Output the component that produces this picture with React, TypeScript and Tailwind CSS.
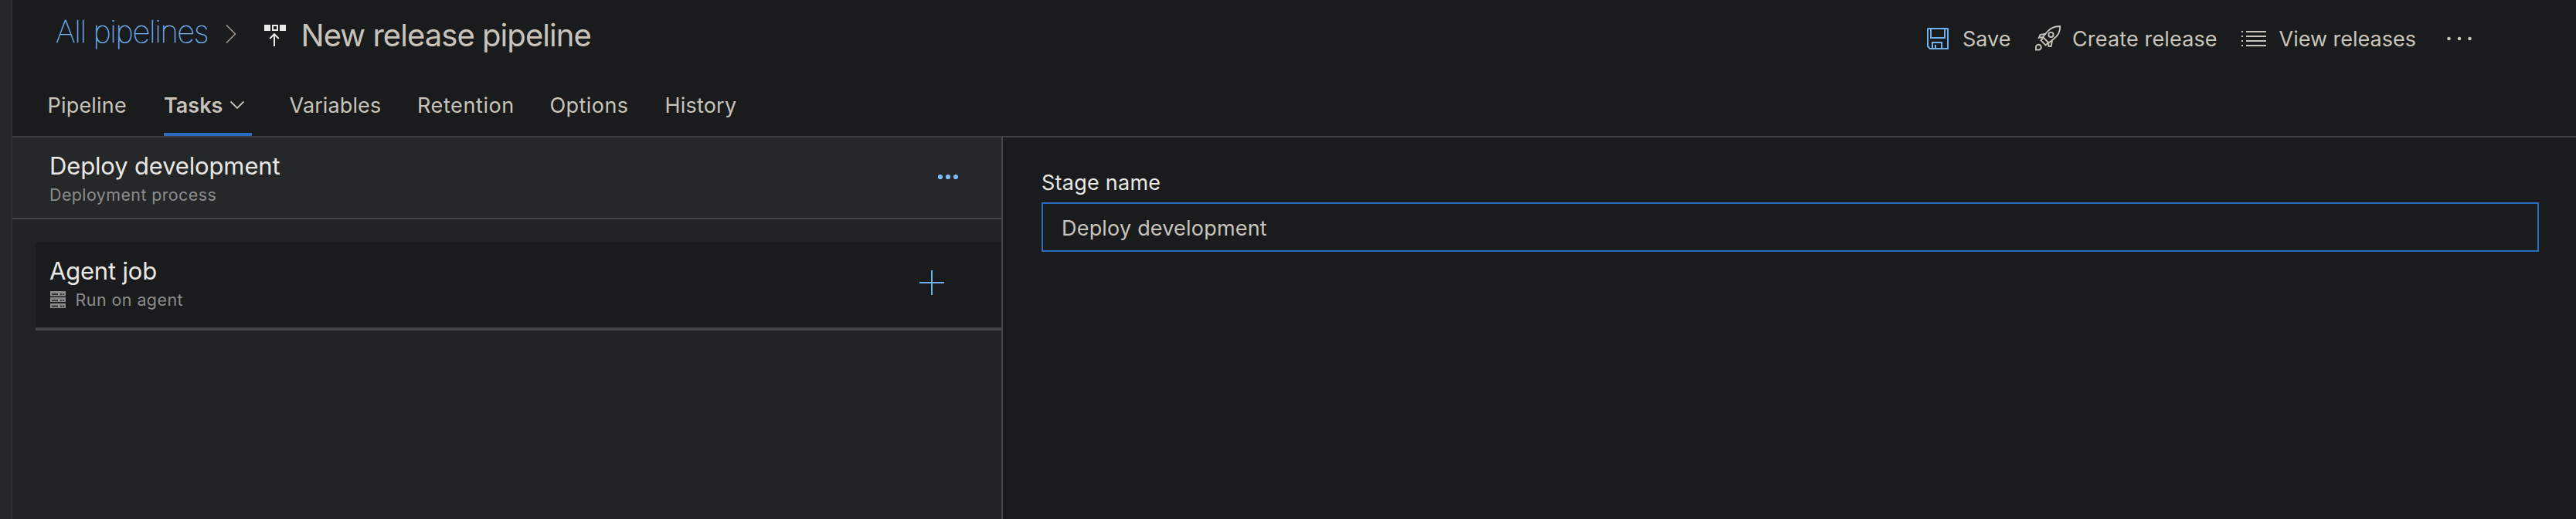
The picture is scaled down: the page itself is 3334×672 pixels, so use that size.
const tabs = [
  { label: "Variables", className: "w-[165.5px] tracking-[0.12px]" },
  { label: "Retention", className: "w-[171.5px] tracking-[0.6px]" },
  { label: "Options", className: "w-[149px] tracking-[0.43px]" },
  { label: "History", className: "w-[100px] tracking-[0.2px]" },
];

function BreadcrumbChevron() {
  return (
    <svg className="h-7 w-4" viewBox="0 0 16 28" fill="none" stroke="#a19a92" strokeWidth="1.6">
      <path d="M2 2.5 13.5 14 2 25.5" />
    </svg>
  );
}

function ReleaseIcon() {
  return (
    <svg className="h-7 w-7" viewBox="0 0 28 28" fill="none" stroke="#eae8e4" strokeWidth="2">
      <path d="M0 0h8v8H0zM20 0h8v8h-8z" fill="#eae8e4" stroke="none" />
      <path d="M11 1h6v6h-6z" />
      <path d="M13 28V12" />
      <path d="M7.2 18 13 12.2 18.8 18" />
    </svg>
  );
}

function SaveIcon() {
  return (
    <svg className="h-7 w-7" viewBox="0 0 28 28" fill="none" stroke="#6fb1f0" strokeWidth="2">
      <path d="M2 1h24.5l.5.5V27H4l-3-3V1.5z" />
      <path d="M5 1v12h18V1" />
      <path d="M7 27v-8h12v8" />
      <path d="M11 22v5" />
    </svg>
  );
}

function RocketIcon() {
  return (
    <svg className="h-[34px] w-[34px]" viewBox="0 0 34 34" fill="none" stroke="#c8c4bc" strokeWidth="1.9">
      <path d="M32.2 1C25 .8 19.5 3.5 15.2 8.5L10 15l7.5 7.5 7-5.4C29.5 13 32.5 8 32.2 1z" />
      <circle cx="20.5" cy="12" r="3.1" />
      <path d="M14 10.8 6.5 12 4.800 15.8 10 15.3" />
      <path d="M22 19.5 20.6 27H17.5l-.5-5" />
      <path d="M10 16.5 7.500 19.3l6 6.2 3.7-3.2" />
      <path d="M1 31.5V28a3.4 3.4 0 1 1 3.4 3.5z" />
    </svg>
  );
}

function ListIcon() {
  return (
    <svg className="h-5 w-8" viewBox="0 0 32 20" fill="#c8c4bc">
      <path d="M0 0h2v2H0zM6 0h26v2H6zM0 6h2v2H0zM6 6h26v2H6zM0 12h2v2H0zM6 12h26v2H6zM0 18h2v2H0zM6 18h26v2H6z" />
    </svg>
  );
}

function ServerIcon() {
  return (
    <svg className="h-[22px] w-5" viewBox="0 0 20 22">
      <path d="M0 0h20v6.500H0zM0 8h20v6H0zM0 15.800h20V22H0z" fill="#8b8b8b" />
      <path d="M2 3h8v2H2zM13 3h2v2h-2zM16 3h2v2h-2zM2 11h8v1.800H2zM13 11h2v1.800h-2zM16 11h2v1.800h-2zM2 18.500h8v2H2zM13 18.500h2v2h-2zM16 18.500h2v2h-2z" fill="#303133" />
    </svg>
  );
}

function Toolbar() {
  return (
    <div className="flex items-start text-[27px] leading-10">
      <button className="flex w-[140px] items-start">
        <span className="mt-9 w-[46px]"><SaveIcon /></span>
        <span className="mt-[31px]">Save</span>
      </button>
      <button className="flex w-[267px] items-start">
        <span className="mt-[33px] w-12"><RocketIcon /></span>
        <span className="mt-[31px] tracking-[0.15px]">Create release</span>
      </button>
      <button className="flex w-[266px] items-start">
        <span className="mt-10 w-[48.5px]"><ListIcon /></span>
        <span className="mt-[31px]">View releases</span>
      </button>
      <button className="mt-[46px]" aria-label="More actions">
        <svg className="h-2 w-8" viewBox="0 0 32 8" fill="#c8c4bc">
          <circle cx="2.500" cy="4" r="2.300" />
          <circle cx="16" cy="4" r="2.300" />
          <circle cx="29.500" cy="4" r="2.300" />
        </svg>
      </button>
    </div>
  );
}

function Header() {
  return (
    <header className="h-[178px] border-b-2 border-[#404143] text-[#c8c4bc]">
      <div className="flex h-24 items-start justify-between pr-[135px] pl-14">
        <div className="flex items-start text-[40px] leading-10 whitespace-nowrap">
          <a className="mt-[21px] w-[219px] font-thin tracking-[-1.4px] text-[#74b6f5] [-webkit-text-stroke:0.4px_#74b6f5]">
            All pipelines
          </a>
          <span className="mt-[30px] w-[51px]"><BreadcrumbChevron /></span>
          <span className="mt-8 w-[47.5px]"><ReleaseIcon /></span>
          <h1 className="mt-[26px] tracking-[-0.95px]">New release pipeline</h1>
        </div>
        <Toolbar />
      </div>
      <nav className="flex h-20 items-start pl-[45.5px] text-[27px] leading-10">
        <a className="w-[150.5px] pt-[21px] tracking-[0.2px]">Pipeline</a>
        <a className="mr-[48.5px] flex h-20 w-[114px] items-start border-b-4 border-[#2b6cbe] pt-[21px] font-semibold">
          <span className="w-[85px]">Tasks</span>
          <svg className="mt-[13px] h-3 w-5" viewBox="0 0 20 12" fill="none" stroke="#c8c4bc" strokeWidth="1.8">
            <path d="M1.5 1.5 10 10l8.5-8.5" />
          </svg>
        </a>
        {tabs.map((tab) => (
          <a key={tab.label} className={`${tab.className} pt-[21px]`}>{tab.label}</a>
        ))}
      </nav>
    </header>
  );
}

function TaskList() {
  return (
    <section className="w-[1282px] border-r-2 border-[#434446] bg-[#212223] text-[#8b8b8b]">
      <div className="flex h-[106px] items-start justify-between border-b-2 border-[#434446] bg-[#262728] pr-[56px] pl-12">
        <div>
          <h2 className="mt-[17px] text-[31px] leading-10 tracking-[-0.15px] text-[#eae8e4]">Deploy development</h2>
          <p className="mt-[3px] text-[21.5px] leading-7 tracking-[0.37px]">Deployment process</p>
        </div>
        <svg className="mt-[47px] h-2 w-[27px]" viewBox="0 0 27 8" fill="#7fbdf8">
          <circle cx="4" cy="4" r="3.1" />
          <circle cx="14" cy="4" r="3.1" />
          <circle cx="24" cy="4" r="3.1" />
        </svg>
      </div>
      <div className="mt-[30px] ml-[30px] flex h-[114px] items-start justify-between border-b-4 border-[#434446] bg-[#1a1b1c] pr-[74px] pl-[18px]">
        <div>
          <h3 className="mt-[17px] text-[31px] leading-10 tracking-[-0.2px] text-[#eae8e4]">Agent job</h3>
          <div className="flex items-start pl-px">
            <span className="mt-[6px] w-[32.5px]"><ServerIcon /></span>
            <p className="mt-[3px] text-[21.5px] leading-7 tracking-[0.42px]">Run on agent</p>
          </div>
        </div>
        <svg className="mt-9 h-8 w-8" viewBox="0 0 32 32" stroke="#6fb1f0" strokeWidth="2">
          <path d="M0 16h32M16 0v32" />
        </svg>
      </div>
    </section>
  );
}

function StageDetails() {
  return (
    <section className="flex flex-1 flex-col pt-[39px] pr-12 pl-[50px]">
      <label htmlFor="stage" className="text-[27px] leading-10 tracking-[0.25px] text-[#eae8e4]">Stage name</label>
      <input
        id="stage"
        defaultValue="Deploy development"
        className="mt-[5px] h-16 w-full border-2 border-[#2b6cbe] bg-transparent px-6 pt-0.5 text-[27px] tracking-[0.2px] text-[#c8c4bc] outline-none"
      />
    </section>
  );
}

export default function App() {
  return (
    <div className="flex h-[672px] w-full overflow-hidden bg-[#1a1b1c] font-['Inter',sans-serif]">
      <aside className="w-4 border-r-2 border-[#303133] bg-[#262728]" />
      <div className="flex flex-1 flex-col">
        <Header />
        <main className="flex flex-1">
          <TaskList />
          <StageDetails />
        </main>
      </div>
    </div>
  );
}
